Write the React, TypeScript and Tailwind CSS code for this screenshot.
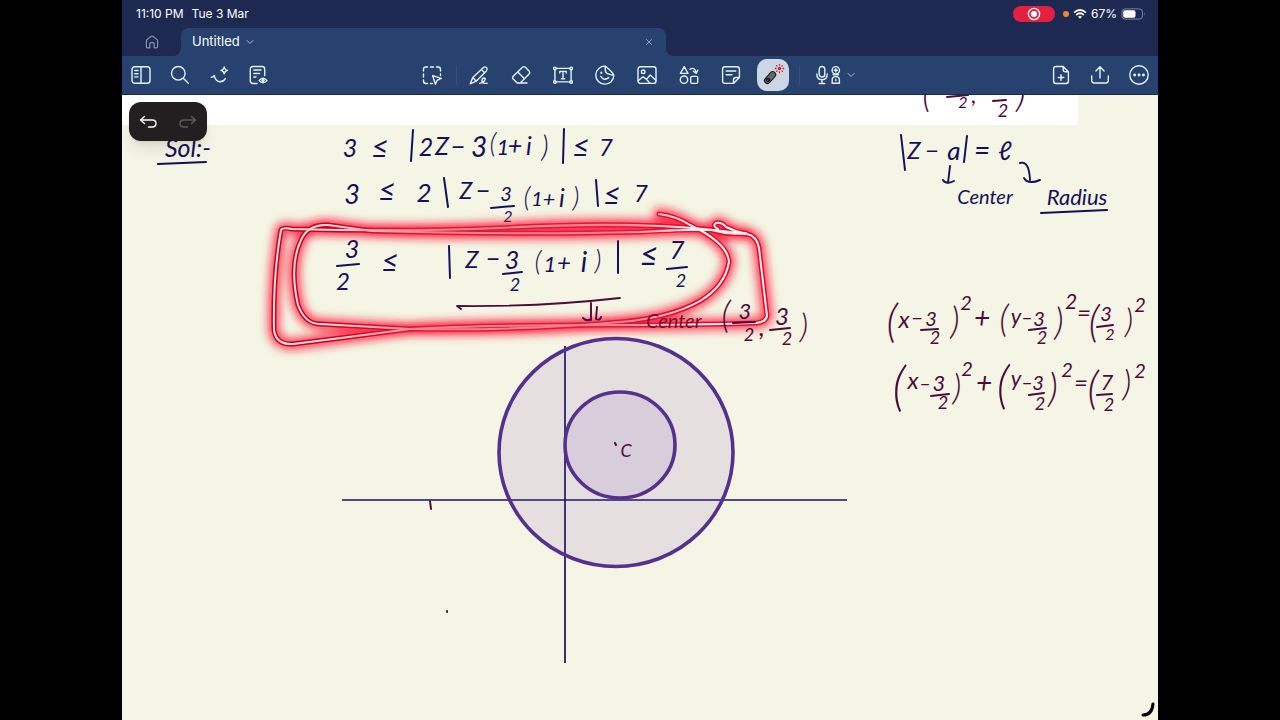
import React from 'react';
import { ChevronDown, X } from 'lucide-react';

type Glyph = [text: string, x: number, y: number, size: number];
type Stroke = [x1: number, y1: number, x2: number, y2: number];

const NAVY = '#14105a';
const MAROON = '#4d0a3c';

const navyGlyphs: Glyph[] = [
    // 3 ≤ |2z - 3(1+i)| ≤ 7
    ['3', 350, 157, 25], ['≤', 380, 158, 30], ['2', 426, 156, 25], ['Z', 442, 155, 25], ['−', 458, 156, 25],
    ['3', 479, 157, 28], ['(', 493, 153, 28], ['1', 503, 155, 22], ['+', 515, 155, 25], ['i', 529, 155, 25],
    [')', 545, 157, 30], ['≤', 581, 157, 30], ['7', 606, 156, 24],
    // 3 ≤ 2|z - 3/2 (1+i)| ≤ 7
    ['3', 352, 204, 27], ['≤', 387, 201, 30], ['2', 424, 202, 26], ['Z', 466, 199, 23], ['−', 483, 200, 25],
    ['3', 506, 201, 20], ['2', 508, 222, 16], ['(', 527, 207, 28], ['1', 537, 206, 20], ['+', 549, 207, 22],
    ['i', 562, 207, 25], [')', 576, 207, 28], ['≤', 612, 205, 30], ['7', 641, 202, 24],
    // 3/2 ≤ |z - 3/2 (1+i)| ≤ 7/2
    ['3', 352, 258, 25], ['2', 343, 290, 24], ['≤', 390, 272, 30], ['Z', 472, 268, 24], ['−', 493, 268, 25],
    ['3', 512, 269, 25], ['2', 515, 291, 18], ['(', 538, 271, 28], ['1', 550, 272, 22], ['+', 564, 271, 24],
    ['i', 584, 272, 28], [')', 598, 270, 28], ['≤', 649, 266, 32], ['7', 677, 259, 26], ['2', 681, 287, 18],
    // |z - a| = r
    ['Z', 914, 159, 24], ['−', 932, 159, 24], ['a', 954, 160, 26], ['=', 982, 160, 28], ['ℓ', 1005, 160, 26],
    ['Center', 985, 204, 20], ['Radius', 1077, 205, 22],
    ['Sol:-', 188, 157, 25],
];

const navyStrokes: Stroke[] = [
    [413, 130, 411, 161], [564, 129, 563, 163],
    [444, 178, 448, 207], [596, 180, 598, 206], [491, 208, 514, 206],
    [337, 266, 359, 264], [449, 246, 450, 278], [503, 274, 522, 272], [618, 241, 618, 273], [667, 269, 687, 267],
    [901, 135, 905, 170], [967, 136, 964, 162],
    [1041, 213, 1107, 210], [158, 164, 206, 162],
];

const maroonGlyphs: Glyph[] = [
    ['(', 726, 328, 38], ['3', 745, 319, 22], ['2', 749, 341, 18], [',', 762, 336, 26],
    ['3', 782, 325, 24], ['2', 787, 345, 18], [')', 804, 338, 34],
    // (x - 3/2)² + (y - 3/2)² = (3/2)²
    ['(', 892, 337, 46], ['x', 904, 328, 24], ['−', 917, 325, 20], ['3', 931, 326, 20], ['2', 935, 344, 18],
    [')', 955, 334, 38], ['2', 966, 310, 20], ['+', 982, 328, 28], ['(', 1004, 332, 38], ['y', 1016, 324, 22],
    ['−', 1027, 324, 18], ['3', 1039, 326, 20], ['2', 1042, 344, 18], [')', 1059, 335, 38], ['2', 1071, 309, 21],
    ['=', 1084, 321, 24], ['(', 1094, 337, 44], ['3', 1106, 321, 20], ['2', 1110, 340, 16], [')', 1129, 333, 34],
    ['2', 1140, 312, 20],
    // (x - 3/2)² + (y - 3/2)² = (7/2)²
    ['(', 899, 405, 54], ['x', 913, 389, 24], ['−', 925, 390, 18], ['3', 939, 391, 22], ['2', 943, 409, 18],
    [')', 957, 400, 36], ['2', 967, 376, 20], ['+', 984, 393, 28], ['(', 1003, 403, 52], ['y', 1016, 386, 22],
    ['−', 1027, 389, 18], ['3', 1038, 390, 20], ['2', 1040, 410, 18], [')', 1053, 402, 40], ['2', 1067, 377, 20],
    ['=', 1081, 391, 24], ['(', 1093, 404, 46], ['7', 1107, 390, 22], ['2', 1109, 411, 18], [')', 1127, 396, 36],
    ['2', 1140, 378, 20],
    // tail of the previous line, cut off by the toolbar
    ['(', 927, 107, 40], ['2', 963, 108, 16], [',', 974, 103, 22], ['2', 1003, 117, 18], [')', 1021, 107, 40],
    ['C', 626, 457, 18],
];

const maroonStrokes: Stroke[] = [
    [733, 323, 755, 322], [770, 330, 790, 328],
    [921, 330, 938, 329], [1029, 330, 1046, 328], [1097, 327, 1113, 325],
    [931, 396, 949, 394], [1029, 395, 1044, 393], [1097, 395, 1112, 394],
    [947, 97, 968, 95], [993, 101, 1006, 100],
    [430, 501, 431, 509], [615, 443, 616, 445], [447, 611, 447, 612],
];

const laserPaths = [
    'M718 229Q712 226 716 223Q722 222 726 227Q736 232 747 234Q757 236 759 248L767 316Q766 322 756 323Q690 325 620 325Q480 325 410 329Q350 337 293 344Q276 345 274 330Q273 275 281 230Q283 227 292 229Q400 232 500 228Q590 223 660 226Q705 228 745 234',
    'M659 214Q676 216 690 225Q728 243 729 262Q725 286 700 301Q670 318 620 322Q520 331 410 329L320 324Q305 324 298 305Q289 265 301 240Q308 224 328 225Q350 228 372 231Q520 235 640 232Q712 228 716 231Q730 235 746 233',
];

const Ink: React.FC<{ color: string; glyphs: Glyph[]; strokes: Stroke[] }> = ({ color, glyphs, strokes }) => (
    <g stroke={color} strokeWidth="2" strokeLinecap="round">
        {glyphs.map(([text, x, y, size], index) => (
            <text
                key={index}
                x={x}
                y={y}
                fontSize={size}
                fill={color}
                stroke="none"
                textAnchor="middle"
                className={text === '(' || text === ')' ? 'font-light' : 'font-normal'}
            >
                {text}
            </text>
        ))}
        {strokes.map(([x1, y1, x2, y2], index) => (
            <line key={index} x1={x1} y1={y1} x2={x2} y2={y2} />
        ))}
    </g>
);

const Whiteboard: React.FC = () => (
    <svg
        viewBox="122 95 1036 625"
        preserveAspectRatio="xMinYMin meet"
        className="absolute inset-0 size-full font-['Lato','DejaVu_Sans',sans-serif] italic"
        role="img"
        aria-label="Handwritten notes"
        fill="none"
    >
        <defs>
            <filter id="glow" x="-10%" y="-30%" width="120%" height="160%">
                <feGaussianBlur stdDeviation="4" />
            </filter>
            <linearGradient id="core" gradientUnits="userSpaceOnUse" x1="274" y1="0" x2="770" y2="0">
                <stop offset="0.1" stopColor="#ffdcdc" />
                <stop offset="0.3" stopColor="#f8808f" />
                <stop offset="0.7" stopColor="#f8808f" />
                <stop offset="0.85" stopColor="#fff2f2" />
            </linearGradient>
            <linearGradient id="beam" gradientUnits="userSpaceOnUse" x1="274" y1="0" x2="770" y2="0">
                <stop offset="0.1" stopColor="#c00425" />
                <stop offset="0.3" stopColor="#dc1a3b" />
                <stop offset="0.7" stopColor="#dc1a3b" />
                <stop offset="0.85" stopColor="#e00a2c" />
            </linearGradient>
        </defs>
        <g stroke={NAVY} strokeWidth="1.7">
            <path d="M342 500H847M565 346V663" />
        </g>
        <g stroke="#55308c" strokeWidth="3.6" fill="#7f46ba" fillOpacity="0.12">
            <ellipse cx="616" cy="452.5" rx="117" ry="114" />
            <ellipse cx="620" cy="445" rx="55" ry="53" />
        </g>
        <Ink color={NAVY} glyphs={navyGlyphs} strokes={navyStrokes} />
        <g strokeWidth="1.9" strokeLinecap="round" strokeLinejoin="round">
            <path stroke={NAVY} d="M950 166L948 183M943 180Q946 185 954 181M1020 163Q1029 160 1030 180M1024 178Q1028 185 1040 180" />
            <path stroke="#000" strokeWidth="3" d="M1143 715Q1152 715 1153 704" />
        </g>
        <g strokeLinecap="round" strokeLinejoin="round">
            <g stroke="#ff1838" strokeWidth="12" strokeOpacity="0.8" filter="url(#glow)">
                {laserPaths.map((d) => <path key={d} d={d} />)}
            </g>
            <g stroke="url(#beam)" strokeWidth="5">
                {laserPaths.map((d) => <path key={d} d={d} />)}
            </g>
            <g stroke="url(#core)" strokeWidth="2">
                {laserPaths.map((d) => <path key={d} d={d} />)}
            </g>
        </g>
        <Ink color={MAROON} glyphs={maroonGlyphs} strokes={maroonStrokes} />
        <text x="646" y="328" fontSize="20" fill="#7a0b30">Center</text>
        <path
            stroke={MAROON}
            strokeWidth="1.9"
            strokeLinecap="round"
            strokeLinejoin="round"
            d="M461 309L457 306Q540 307 620 298M591 303V320M583 318Q587 322 591 319M597 307L596 319Q600 321 601 317"
        />
    </svg>
);

const Icon: React.FC<{ children: React.ReactNode }> = ({ children }) => (
    <svg viewBox="0 0 20 20" className="size-5" fill="none" stroke="currentColor" strokeWidth="1.4" strokeLinecap="round" strokeLinejoin="round" aria-hidden="true">
        {children}
    </svg>
);

const leftTools = [
    { label: 'Sidebar', icon: <><rect x="1" y="1.7" width="18" height="16.6" rx="2.8" /><path d="M10 2V18M3.8 5.5H7M3.8 8.7H7M3.8 11.9H7" /></> },
    { label: 'Search', icon: <><circle cx="8.3" cy="8.3" r="6.8" /><path d="M13.3 13.3L18.3 18.3" /></> },
    { label: 'Magic lasso', icon: <><path d="M2.2 12.2Q4.5 12.4 5.2 10.4Q6.4 16.2 10.5 16.8Q14.4 17 16.3 13.6" /><path d="M15.2 2Q15.7 4.9 18.5 5.4Q15.7 5.9 15.2 8.8Q14.7 5.9 11.9 5.4Q14.7 4.9 15.2 2Z" /></> },
    { label: 'Outline', icon: <><path d="M9 18.5H5Q2.3 18.5 2.3 15.8V4.2Q2.3 1.5 5 1.5H14Q16.7 1.5 16.7 4.2V10.5M5.8 5H13M5.8 8.5H11.5M5.8 12H8" /><path d="M11 15.6Q15 10.8 19 15.6Q15 20 11 15.6Z" /><circle cx="15" cy="15.5" r="1" /></> },
];

const penTools = [
    { label: 'Pen', icon: <><path d="M1.2 18.8L3.8 12.5L14.5 2.4Q16 1.2 17.6 2.7Q18.9 4.3 17.4 5.9L7.2 16.2ZM3.8 12.5L7.2 16.2M12.4 4.5L15.6 7.7" /><path d="M10.5 18.4Q13.5 18.3 15.7 15.5Q17.2 13 15 13Q12.5 13.5 13 16.5Q13.8 19 18.2 18.1" /></> },
    { label: 'Eraser', icon: <path d="M6.2 18L2.2 14Q1 12.6 2.2 11.3L11.5 2.2Q13 1 14.4 2.2L18.2 6.2Q19.3 7.5 18.1 8.9L9.2 18ZM6.8 7L13.5 13.8M6.2 18H16" /> },
    { label: 'Text', icon: <><path d="M3.2 3.4H16.8M3.2 16.9H16.8M1.9 4.7V15.6M18.1 4.7V15.6M6.8 8V6.4H13.2V8M10 6.4V13.7M8.3 13.7H11.7" /><circle cx="1.9" cy="3.4" r="1.3" /><circle cx="18.1" cy="3.4" r="1.3" /><circle cx="1.9" cy="16.9" r="1.3" /><circle cx="18.1" cy="16.9" r="1.3" /></> },
    { label: 'Sticker', icon: <><path d="M10.5 1.2A9 9 0 1 0 18.8 10.2Q18.6 8 10.5 1.2ZM10.5 1.2Q9.5 7.5 12.5 8.6Q15.5 9.8 18.8 10.2M5.8 11.4Q9 16.4 13.7 12.6" /><path d="M6.3 7.4V8" strokeWidth="2" /></> },
    { label: 'Image', icon: <><rect x="1" y="1.8" width="18" height="16.6" rx="2.5" /><circle cx="6.2" cy="6.8" r="1.8" /><path d="M1.2 15.8L6 11.8L9.5 14.4L13.2 10L18.8 15.3M9.5 14.4L13 18.2" /></> },
    { label: 'Shapes', icon: <><path d="M5.2 1.6L9 8.4H1.4Z" /><circle cx="5" cy="14.7" r="3.7" /><rect x="11.7" y="11.4" width="7" height="7" rx="1.3" /><path d="M11 4.2Q16 1.6 17 7.6M14.3 6.2L17.1 8.3L18.8 5.2" /></> },
    { label: 'Note', icon: <path d="M12.5 18.4H4Q1.6 18.4 1.6 16V4.2Q1.6 1.8 4 1.8H16Q18.4 1.8 18.4 4.2V12.5ZM12.5 18.4V15Q12.5 12.5 15 12.5H18.4M5.2 6H14.8M5.2 9.8H11" /> },
];

const rightTools = [
    { label: 'Add page', icon: <path d="M12.2 1.5H5Q2.6 1.5 2.6 4V16Q2.6 18.5 5 18.5H15Q17.4 18.5 17.4 16V6.7ZM12.2 1.5V4.7Q12.2 6.7 14.2 6.7H17.4M10 9.7V15.3M7.2 12.5H12.8" /> },
    { label: 'Share', icon: <path d="M1.7 11V15.6Q1.7 18 4.2 18H15.8Q18.3 18 18.3 15.6V11M10 13V2M5.9 6L10 1.8L14.1 6" /> },
    { label: 'More', icon: <><circle cx="10" cy="10" r="9.2" /><path d="M5.6 10H5.7M10 10H10.1M14.4 10H14.5" strokeWidth="2.8" /></> },
];

const StatusBar: React.FC = () => (
    <div className="flex h-7 items-center justify-between pr-3 pl-3.5 text-xs">
        <div className="flex gap-2">
            <span>11:10 PM</span>
            <span>Tue 3 Mar</span>
        </div>
        <div className="flex items-center gap-1">
            <span className="mr-1 flex h-4 w-[42px] items-center justify-center rounded-full bg-[#e5203f]">
                <svg viewBox="0 0 14 14" className="size-3.5" fill="none" stroke="white" aria-hidden="true">
                    <circle cx="7" cy="7" r="5.6" strokeWidth="1.4" />
                    <circle cx="7" cy="7" r="3" fill="white" stroke="none" />
                </svg>
            </span>
            <span className="size-1.5 rounded-full bg-[#ea8638]" />
            <svg viewBox="0 0 14 10" className="h-2.5 w-3.5" fill="none" stroke="white" strokeWidth="1.8" aria-hidden="true">
                <path d="M1 3.7Q7 -1.6 13 3.7M3.2 6Q7 2.6 10.8 6" />
                <path d="M5 7.6Q7 6 9 7.6L7 9.8Z" fill="white" stroke="none" />
            </svg>
            <span>67%</span>
            <svg viewBox="0 0 25 12" className="h-3 w-[25px]" fill="none" aria-hidden="true">
                <rect x="0.9" y="0.9" width="20.6" height="10.2" rx="3.2" stroke="#7b84a3" />
                <rect x="2.2" y="2.2" width="12.3" height="7.6" rx="2" fill="white" />
                <path d="M23 4V8Q24.3 6 23 4Z" fill="#7b84a3" />
            </svg>
        </div>
    </div>
);

const TabBar: React.FC = () => (
    <div className="flex h-7">
        <div className="w-[59px] bg-[#28426f]">
            <button aria-label="Home" className="flex size-full items-center justify-center rounded-br-lg bg-[#1e2952] text-[#8791b3]">
                <svg viewBox="0 0 14 14" className="size-3.5" fill="none" stroke="currentColor" strokeWidth="1.2" strokeLinejoin="round" aria-hidden="true">
                    <path d="M1.4 5.8Q1.4 5 2.2 4.4L6.2 1.3Q7 .8 7.8 1.3L11.8 4.4Q12.6 5 12.6 5.8V11.6Q12.6 12.8 11.4 12.8H9.2V9.4Q9.2 7.3 7 7.3Q4.8 7.3 4.8 9.4V12.8H2.6Q1.4 12.8 1.4 11.6Z" />
                </svg>
            </button>
        </div>
        <div className="flex w-[485px] items-center justify-between rounded-t-lg bg-[#28426f] pr-3 pl-[11px]">
            <button className="flex items-center gap-1 text-[13px]">
                Untitled
                <ChevronDown className="size-3 text-[#a9c3df]" />
            </button>
            <button aria-label="Close tab" className="text-[#9db2d0]">
                <X className="size-2.5" />
            </button>
        </div>
        <div className="flex-1 bg-[#28426f]">
            <div className="h-full rounded-bl-lg bg-[#1e2952]" />
        </div>
    </div>
);

const Toolbar: React.FC = () => (
    <div className="grid h-[39px] grid-cols-[1fr_auto_1fr] items-center border-b border-[#172b52] bg-[#28426f] px-[9px] text-[#e2f2fb]">
        <div className="flex gap-[19px]">
            {leftTools.map(({ label, icon }) => (
                <button key={label} aria-label={label}><Icon>{icon}</Icon></button>
            ))}
        </div>
        <div className="flex items-center">
            <button aria-label="Select" className="flex size-8 items-center justify-center">
                <Icon>
                    <path d="M1.5 6V4.5Q1.5 2 4 2H5.5M8.5 2H11.5M14.5 2H16Q18.5 2 18.5 4.5V6M18.5 9V10.5M1.5 9V12M1.5 15V16Q1.5 18.5 4 18.5H5.5M8.5 18.5H10.5M10.6 10.6L19.2 13.4L15.2 15.3L13.4 19.2Z" />
                </Icon>
            </button>
            <span className="mr-1.5 ml-2 h-5 w-px bg-[#35507f]" />
            <div className="flex gap-2.5">
                {penTools.map(({ label, icon }) => (
                    <button key={label} aria-label={label} className="flex size-8 items-center justify-center"><Icon>{icon}</Icon></button>
                ))}
                <button aria-label="Laser pointer" className="flex size-8 items-center justify-center rounded-[10px] bg-[#cdd6e5]">
                    <svg viewBox="0 0 24 24" className="size-6" fill="none" strokeLinecap="round" aria-hidden="true">
                        <path d="M6.5 17.5L11.7 11.6" stroke="#1d1d1f" strokeWidth="7" />
                        <path d="M6.5 17.5L11.7 11.6" stroke="#68686b" strokeWidth="4.8" />
                        <circle cx="7" cy="17" r="1.8" fill="#303033" stroke="#151517" />
                        <circle cx="18.5" cy="5.5" r="1.7" fill="#d9142f" />
                        <path d="M18.5 1.4V2M18.5 9V9.6M14.4 5.5H15M22 5.5H22.6M15.6 2.6L16 3M21 8L21.4 8.4M15.6 8.4L16 8M21 3L21.4 2.6" stroke="#d9142f" strokeWidth="1.3" />
                    </svg>
                </button>
            </div>
            <span className="ml-2.5 h-5 w-px bg-[#35507f]" />
            <button aria-label="Record audio" className="ml-4 flex w-12 items-center gap-1">
                <svg viewBox="0 0 25 20" className="h-5 w-[25px]" fill="none" stroke="currentColor" strokeWidth="1.4" strokeLinecap="round" aria-hidden="true">
                    <rect x="3.2" y="1.5" width="5.6" height="10.5" rx="2.8" />
                    <path d="M.8 9Q.8 14.8 6 14.8Q11.2 14.8 11.2 9M6 14.8V18.5M3.2 18.5H8.8" />
                    <circle cx="19.8" cy="5.3" r="3.7" />
                    <path d="M18.2 5.3H21.4M19.8 3.7V6.9M17.2 9.7H22.4M16.2 18.3H23.4V14.8Q23.4 11.6 19.8 11.6Q16.2 11.6 16.2 14.8ZM19.8 14.4V15.8" />
                </svg>
                <ChevronDown className="size-3 text-[#a9c3df]" />
            </button>
        </div>
        <div className="flex justify-end gap-[19px]">
            {rightTools.map(({ label, icon }) => (
                <button key={label} aria-label={label}><Icon>{icon}</Icon></button>
            ))}
        </div>
    </div>
);

export default function App() {
    return (
        <div className="min-h-screen bg-black px-[122px]">
            <div className="flex min-h-screen flex-col bg-[#f4f5e4] font-['Inter',sans-serif] text-white">
                <header className="bg-[#1e2952]">
                    <StatusBar />
                    <TabBar />
                    <Toolbar />
                </header>
                <main className="relative flex-1 overflow-hidden">
                    <div className="mr-20 h-[30px] bg-white" />
                    <Whiteboard />
                    <div className="absolute top-[7px] left-[7px] flex h-[39px] w-[78px] items-center justify-between rounded-xl bg-[#231f20] px-2.5 shadow-lg">
                        <button aria-label="Undo">
                            <Icon><path d="M5.5 4.5L1.5 8L5.5 11.5M1.8 8H13Q17 8 17 11.5Q17 15 13 15H9.5" /></Icon>
                        </button>
                        <button aria-label="Redo" disabled className="text-[#5c595b]">
                            <Icon><path d="M14.5 4.5L18.5 8L14.5 11.5M18.2 8H7Q3 8 3 11.5Q3 15 7 15H10.5" /></Icon>
                        </button>
                    </div>
                </main>
            </div>
        </div>
    );
}
